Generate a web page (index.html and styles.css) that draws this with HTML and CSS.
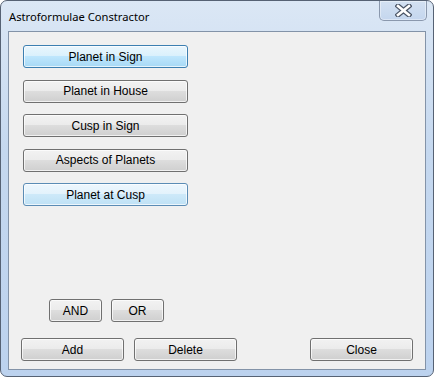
FILE: index.html
```html
<!DOCTYPE html>
<html lang="en">
<head>
    <meta charset="UTF-8">
    <title>Astroformulae Constractor</title>
    <link rel="stylesheet" href="styles.css">
</head>
<body>
    <div class="window">
        <div class="titlebar">
            <span class="title">Astroformulae Constractor</span>
            <button class="close-x" title="Close">
                <svg width="17" height="13" viewBox="0 0 17 13">
                    <path d="M3 2 L14 11 M14 2 L3 11" stroke="#4b5566" stroke-width="5" stroke-linecap="square"/>
                    <path d="M3 2 L14 11 M14 2 L3 11" stroke="#ffffff" stroke-width="2.6" stroke-linecap="square"/>
                </svg>
            </button>
        </div>
        <div class="client">
            <div class="list">
                <button class="btn wide hot">Planet in Sign</button>
                <button class="btn wide">Planet in House</button>
                <button class="btn wide">Cusp in Sign</button>
                <button class="btn wide">Aspects of Planets</button>
                <button class="btn wide focus">Planet at Cusp</button>
            </div>
            <div class="ops">
                <button class="btn small">AND</button>
                <button class="btn small">OR</button>
            </div>
            <div class="footer">
                <button class="btn action">Add</button>
                <button class="btn action">Delete</button>
                <button class="btn action close">Close</button>
            </div>
        </div>
    </div>
</body>
</html>
```

FILE: styles.css
```css
body {
    margin: 0;
    font-family: "Liberation Sans", Arial, sans-serif;
}
.window {
    width: 434px;
    height: 377px;
    box-sizing: border-box;
    border: 1px solid #566274;
    border-radius: 7px;
    background: linear-gradient(to bottom, #dbe7f5 0%, #c5d8ef 40%, #bcd2ee 100%);
    padding: 0 7px 6px 7px;
    display: flex;
    flex-direction: column;
}
.titlebar {
    height: 30px;
    display: flex;
    justify-content: space-between;
    align-items: flex-start;
}
.title {
    font-family: "Noto Sans", sans-serif;
    font-size: 11.2px;
    color: #000;
    margin: 8px 0 0 1px;
}
.close-x {
    width: 48px;
    height: 20px;
    margin-right: -1px;
    padding: 0;
    border: 1px solid #8a98ad;
    border-top: none;
    border-radius: 0 0 5px 5px;
    background: linear-gradient(to bottom, #d3e1f2, #c4d6ee);
    display: flex;
    align-items: center;
    justify-content: center;
    box-shadow: inset 0 0 0 1px rgba(255,255,255,0.4);
}
.client {
    flex: 1;
    border: 1px solid #8393a8;
    background: #f0f0f0;
    display: flex;
    flex-direction: column;
    padding: 13px 12px 8px 12px;
}
.list {
    display: flex;
    flex-direction: column;
    gap: 11.5px;
    padding-left: 2px;
}
.btn {
    height: 23px;
    box-sizing: border-box;
    padding: 0;
    border: 1px solid #707070;
    border-radius: 3px;
    background: linear-gradient(to bottom, #f2f2f2 0%, #ebebeb 50%, #dddddd 50%, #cfcfcf 100%);
    font-family: "Liberation Sans", Arial, sans-serif;
    font-size: 12px;
    color: #000;
    box-shadow: inset 0 0 0 1px rgba(255,255,255,0.7);
}
.btn.wide {
    width: 165px;
}
.btn.hot {
    border-color: #3c7fb1;
    background: linear-gradient(to bottom, #eaf6fd 0%, #d9f0fc 50%, #bee6fd 50%, #a7d9f5 100%);
}
.btn.focus {
    border-color: #5b8cb5;
    background: linear-gradient(to bottom, #eef7fd 0%, #e2f2fc 50%, #cde9f9 50%, #bfe1f5 100%);
}
.ops {
    margin-top: auto;
    display: flex;
    gap: 9px;
    padding-left: 28px;
}
.btn.small {
    width: 53px;
}
.footer {
    margin-top: 16px;
    display: flex;
    gap: 10px;
}
.btn.action {
    width: 103px;
}
.btn.close {
    margin-left: auto;
}
```
